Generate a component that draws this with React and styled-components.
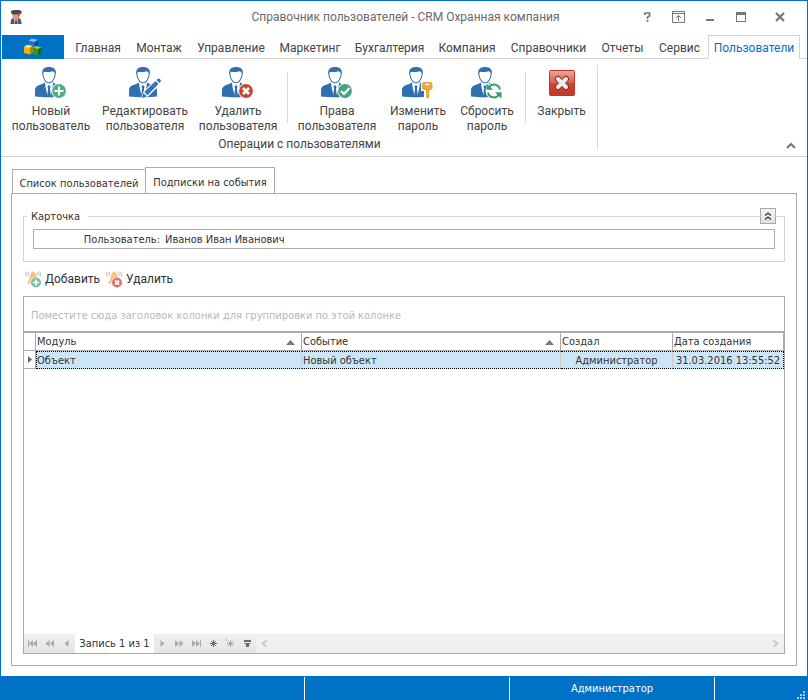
import React from "react";
import styled, { createGlobalStyle } from "styled-components";

const accent = "#0072c6";
const uiFont = 'Roboto, "Open Sans", "Noto Sans", sans-serif';
const formFont = '"DejaVu Sans Condensed", "DejaVu Sans", sans-serif';

const GlobalStyle = createGlobalStyle`
  * {
    box-sizing: border-box;
  }
  body {
    margin: 0;
    background: #fff;
    color: #444;
    font-family: ${uiFont};
    font-size: 12px;
  }
  button, input {
    margin: 0;
    padding: 0;
    border: 0;
    background: none;
    color: inherit;
    font: inherit;
  }
  svg {
    display: block;
    flex: none;
  }
`;

const Window = styled.div`
  display: flex;
  flex-direction: column;
  min-height: 100vh;
  border: 1px solid ${accent};
  border-bottom: 0;
`;

/* title bar */

const TitleBar = styled.header`
  display: grid;
  grid-template-columns: 200px 1fr 200px;
  align-items: center;
  height: 34px;
  padding: 0 4px 2px 7px;
`;

const Title = styled.h1`
  margin: 0;
  font-size: 12px;
  line-height: 20px;
  font-weight: normal;
  text-align: center;
  white-space: nowrap;
  color: #6a6a6a;
`;

const WindowButtons = styled.div`
  display: flex;
  justify-content: flex-end;
`;

const WindowButton = styled.button`
  display: flex;
  align-items: center;
  justify-content: center;
  width: ${(props) => (props.$wide ? "47px" : "31px")};
  height: 20px;
`;

/* ribbon */

const TabRow = styled.nav`
  display: flex;
  align-items: stretch;
  height: 24px;
  padding: 0 6px 0 1px;
  box-shadow: inset 0 -1px #d4d4d4;
`;

const AppButton = styled.button`
  display: flex;
  align-items: center;
  justify-content: center;
  width: 62px;
  margin-right: 4px;
  background: ${accent};
`;

const RibbonTab = styled.button`
  display: flex;
  align-items: center;
  justify-content: center;
  width: ${(props) => props.$width}px;
  padding-top: 1px;
  border: 1px solid transparent;
  border-width: 1px 1px 0;
  white-space: nowrap;
  ${(props) =>
    props.$active &&
    `
    background: #fff;
    border-color: #d4d4d4;
    color: ${accent};
  `}
`;

const Ribbon = styled.section`
  display: flex;
  justify-content: space-between;
  align-items: flex-end;
  padding: 6px 11px 6px 1px;
  border-bottom: 1px solid #d4d4d4;
`;

const RibbonGroup = styled.div`
  display: flex;
  flex-direction: column;
  border-right: 1px solid #d9d9d9;
`;

const RibbonItems = styled.div`
  display: flex;
  height: 74px;
`;

const GroupCaption = styled.div`
  line-height: 11px;
  text-align: center;
`;

const RibbonButton = styled.button`
  display: flex;
  flex-direction: column;
  align-items: center;
  width: ${(props) => props.$width}px;
  padding-top: 2px;
  gap: 5px;
  line-height: 15px;
  text-align: center;
  white-space: pre-line;
`;

const RibbonDivider = styled.div`
  width: 1px;
  height: 51px;
  margin: 7px 0 0 1px;
  background: #d9d9d9;
`;

const CollapseButton = styled.button`
  padding-bottom: 1px;
`;

/* form area */

const Main = styled.main`
  flex: 1;
  display: flex;
  flex-direction: column;
  padding: 10px;
  font-family: ${formFont};
  font-size: 11px;
  color: #333;
`;

const PageTabs = styled.div`
  display: flex;
  align-items: flex-end;
  padding-left: 1px;
`;

const PageTab = styled.button`
  width: ${(props) => props.$width}px;
  height: ${(props) => (props.$active ? 27 : 24)}px;
  margin-bottom: ${(props) => (props.$active ? -1 : 0)}px;
  padding-top: ${(props) => (props.$active ? 2 : 3)}px;
  border: 1px solid #ababab;
  border-bottom: 0;
  border-right-width: ${(props) => (props.$active ? 1 : 0)}px;
  background: #fff;
  white-space: nowrap;
`;

const Page = styled.section`
  flex: 1;
  display: flex;
  flex-direction: column;
  padding: 13px 11px 11px;
  border: 1px solid #ababab;
`;

const CardHeader = styled.div`
  display: flex;
  align-items: center;
  height: 18px;
`;

const CardTitle = styled.h2`
  margin: 0 8px 0 4px;
  font-size: 11px;
  font-weight: normal;
`;

const Rule = styled.span`
  flex: ${(props) => (props.$width ? `none` : 1)};
  width: ${(props) => props.$width || 0}px;
  height: 1px;
  background: #d4d4d4;
`;

const CardToggle = styled.button`
  display: flex;
  align-items: center;
  justify-content: center;
  width: 16px;
  height: 16px;
  border: 1px solid #ababab;
  background: linear-gradient(#f4f4f4, #e2e2e2);
`;

const CardBody = styled.div`
  margin-top: -9px;
  padding: 13px 9px 12px;
  border: 1px solid #d4d4d4;
  border-top: 0;
`;

const Field = styled.div`
  display: flex;
  height: 20px;
  padding-top: 1px;
  border: 1px solid #ababab;
  line-height: 18px;

  label {
    width: 126px;
    text-align: right;
  }

  input {
    flex: 1;
    min-width: 0;
    height: 17px;
    margin-left: 5px;
  }
`;

const Toolbar = styled.div`
  display: flex;
  gap: 6px;
  padding: 8px 2px;
`;

const ToolButton = styled.button`
  display: flex;
  align-items: center;
  gap: 3px;
  height: 18px;
  font-family: ${uiFont};
  font-size: 12px;
  line-height: 18px;
`;

const Grid = styled.div`
  flex: 1;
  display: flex;
  flex-direction: column;
  border: 1px solid #ababab;
`;

const GroupPanel = styled.div`
  height: 36px;
  padding: 0 7px;
  line-height: 37px;
  color: #b8b8b8;
  border-bottom: 2px solid #ababab;
`;

const Table = styled.table`
  width: 100%;
  table-layout: fixed;
  border-collapse: separate;
  border-spacing: 0;
`;

const HeadCell = styled.th`
  height: 18px;
  padding: 1px 1px 0;
  border-right: 1px solid #ababab;
  border-bottom: 1px solid #ababab;
  font-weight: normal;
  line-height: 16px;
  text-align: left;
  white-space: nowrap;

  div {
    display: flex;
    align-items: center;
    justify-content: space-between;
    padding-right: 5px;
  }
`;

const Cell = styled.td`
  height: 18px;
  padding: 1px 1px 0;
  border: 0 solid #cfcbc6;
  border-top: 1px dotted #000;
  border-bottom: 1px dotted #000;
  border-right: 1px solid #cfcbc6;
  background: #cde6f7;
  line-height: 15px;
  white-space: nowrap;
  text-align: ${(props) => props.$align || "left"};

  &:nth-child(2) {
    border-left: 1px dotted #000;
    padding-left: 0;
  }
  &:last-child {
    border-right: 1px dotted #000;
  }
`;

const Indicator = styled.td`
  padding: 0 0 0 4px;
  border-right: 1px solid #ababab;
  border-bottom: 1px solid #ababab;
`;

const GridSpace = styled.div`
  flex: 1;
`;

const Navigator = styled.footer`
  display: flex;
  height: 19px;
  background: #f0f0f0;
`;

const NavGroup = styled.div`
  display: flex;
  background: linear-gradient(#f0f0f0, #e4e4e4);
`;

const NavButton = styled.button`
  display: flex;
  align-items: center;
  justify-content: center;
  width: 17px;
  color: ${(props) => (props.$enabled ? "#6a6a6a" : "#ababab")};
`;

const Position = styled.span`
  width: 79px;
  background: #fff;
  line-height: 20px;
  text-align: center;
  white-space: nowrap;
`;

const ScrollBar = styled.div`
  flex: 1;
  display: flex;
  justify-content: space-between;
`;

/* status bar */

const StatusBar = styled.footer`
  display: grid;
  grid-template-columns: 304fr 205fr 205fr 92fr;
  height: 24px;
  background: ${accent};
  color: #fff;
  font-family: ${formFont};
  font-size: 11px;
`;

const StatusCell = styled.div`
  margin: 1px 0 2px;
  border-right: 1px solid #fff;
  line-height: 23px;
  text-align: center;

  &:last-child {
    display: flex;
    justify-content: flex-end;
    align-items: flex-end;
    margin: 0;
    padding: 0 1px 2px 0;
    border-right: 0;
  }
`;

const badges = {
  add: (
    <g>
      <circle cx="24" cy="24" r="7.8" fill="#fff" />
      <circle cx="24" cy="24" r="6.9" fill="#52ad8a" />
      <path d="M24 19.500v9M19.500 24h9" stroke="#fff" strokeWidth="2" />
    </g>
  ),
  edit: (
    <g>
      <path d="M13 31l2-6L28 12l4 3.500L19 28.500z" fill="#fff" stroke="#fff" strokeWidth="1.500" />
      <path d="M13 31l1.300-5 3.600 3.400z" fill="#3070b0" />
      <path d="M15.300 25L26.500 14l3 3-11 11.300z" fill="#3070b0" />
      <path d="M27.500 13l1.500-1.300c1-.7 3.500 1.500 2.700 2.700L30.400 16z" fill="#3070b0" />
      <path d="M17 26.500l11-11" stroke="#5c90c6" strokeWidth=".6" />
    </g>
  ),
  remove: (
    <g>
      <circle cx="24" cy="24" r="7.8" fill="#fff" />
      <circle cx="24" cy="24" r="6.9" fill="#c9452f" />
      <path d="M21 21l6 6M27 21l-6 6" stroke="#fff" strokeWidth="2.600" />
    </g>
  ),
  check: (
    <g>
      <circle cx="24" cy="24" r="7.8" fill="#fff" />
      <circle cx="24" cy="24" r="6.9" fill="#45a57c" />
      <path d="M20 24l3 3 5.500-6" fill="none" stroke="#fff" strokeWidth="2.200" />
    </g>
  ),
  key: (
    <g>
      <path d="M19 14h12v10h-2v8h-7v-8h-3z" fill="#fff" />
      <path
        d="M21.500 15h7.500l1.500 1.500v5l-1.500 1.500h-1.500v2.500l-1 1 1 1v1.500l-1.500 3-2-2v-7H21.500L20 21.500v-5z"
        fill="#e8a73f"
      />
      <path d="M23.500 17.500h4" stroke="#fff" strokeWidth="1.500" />
    </g>
  ),
  reset: (
    <g>
      <circle cx="23" cy="24" r="8.500" fill="#fff" />
      <g fill="none" stroke="#2f9f70" strokeWidth="2">
        <path d="M18 20.500a6 6 0 0 1 11 2" />
        <path d="M28 27.500a6 6 0 0 1-11-2" />
      </g>
      <path d="M15.500 16.500v6.300h6.500zM30.500 31.500v-6.300h-6.500z" fill="#2f9f70" />
    </g>
  ),
};

const UserIcon = ({ badge }) => (
  <svg width="32" height="32" viewBox="0 0 32 32">
    <path
      d="M0 29.500V24c0-4 1.500-5 5-6.300 2-.8 3.500-1.200 4.500-2.200h9c1 1 2.500 1.400 4.500 2.200 3.500 1.300 5 2.300 5 6.300v5.500c-8 1-20 1-28 0z"
      fill="#3070b0"
    />
    <path d="M10 15h8l-.5 5L15.500 28.500h-3L10.500 20z" fill="#fff" />
    <path d="M13 18.500h2l.5 1.500-.6 1.200 1 8.300h-3.800l1-8.300-.6-1.200z" fill="#3070b0" />
    <path
      d="M6.200 6C6 2 9 0 14 0s8 2 7.800 6c-.2 5-3.300 11.500-7.800 11.500S6.400 11 6.200 6z"
      fill="#fff"
    />
    <path
      d="M7.200 6.500C6.800 2 9.500 0 14 0s7.300 2 6.800 6.500C20.300 11 18 16.300 14 16.300S7.700 11 7.200 6.500z"
      fill="#3070b0"
    />
    <path
      d="M8.300 6.500c.1-.8.3-1.300.7-1.800 3.300.6 6.800.3 9-.4.9.7 1.600 1.200 1.700 2.200C19.400 10.500 17.500 15.200 14 15.200S8.600 10.500 8.300 6.500z"
      fill="#fff"
    />
    {badges[badge]}
  </svg>
);

const CloseIcon = () => (
  <svg width="32" height="32" viewBox="0 0 32 32">
    <defs>
      <linearGradient id="closeFill" x2="0" y2="1">
        <stop offset="0" stopColor="#efa79a" />
        <stop offset=".48" stopColor="#d9604e" />
        <stop offset=".5" stopColor="#cd4636" />
        <stop offset="1" stopColor="#c4372a" />
      </linearGradient>
    </defs>
    <rect x="3.500" y="3.500" width="25" height="25" rx="1" fill="url(#closeFill)" stroke="#b83a2f" />
    <path d="M12 12l8 8M20 12l-8 8" stroke="#8e2b22" strokeWidth="6" strokeLinecap="round" />
    <path d="M12 12l8 8M20 12l-8 8" stroke="#e9edf5" strokeWidth="4" strokeLinecap="round" />
  </svg>
);

const CubesIcon = () => (
  <svg width="18" height="18" viewBox="0 0 18 18">
    <path d="M4.500 2.500L8 .5l6 1.500v6L10 10 4.500 9z" fill="#1d6fe0" />
    <path d="M4.500 2.500L8 .5l6 1.500-3.500 2z" fill="#8cc0ff" />
    <path d="M10.500 4L14 2v6l-3.500 2z" fill="#0b4bb0" />
    <path d="M0 9l3-2 5.500 1v7L6 16.500 0 15z" fill="#f0b400" />
    <path d="M0 9l3-2 5.500 1L6 9.800z" fill="#ffe97a" />
    <path d="M6 9.800L8.500 8v7L6 16.500z" fill="#b87f00" />
    <path d="M9 9.500L12 8l5.500 1.500V15L14 17.500 9 16z" fill="#2f9a1d" />
    <path d="M9 9.500L12 8l5.500 1.500L14 11z" fill="#86d860" />
    <path d="M14 11l3.500-1.500V15L14 17.500z" fill="#186c10" />
  </svg>
);

const OfficerIcon = () => (
  <svg width="16" height="16" viewBox="0 0 16 16">
    <path d="M2.500 15c0-4 1-5.500 3-6h5c2 .5 3 2 3 6z" fill="#55555f" />
    <path d="M6 9.500h4L9.500 15h-3z" fill="#c9ccdb" />
    <path d="M7.600 10h.9l.5 5H7.100z" fill="#34345c" />
    <path d="M4.500 4.500h6.500v3C11 9.500 9.500 10.800 7.800 10.800S4.500 9.500 4.500 7.500z" fill="#e39a78" />
    <path d="M3 2l3-1h5l2.500 1v2.500L11 5.500H4.500L3 4z" fill="#4a4a4a" />
    <path d="M9.500 4H12l-.5 3-1 1.500z" fill="#cf3d22" />
  </svg>
);

const BellIcon = ({ color, remove }) => (
  <svg width="17" height="17" viewBox="0 0 17 17">
    <g fill="none" stroke="#b0b0b0">
      <path d="M2 .5C0 1.500 .5 5 1.500 5.500M4 1C2.500 2 3 4 3.500 4.500M12 1c1 1 1.500 2 1 3.500M14 .5c1.700 1 1.500 3.500 1 5" />
    </g>
    <path d="M8 0l1 1c2.200.7 2.800 3 3.200 7L8 12.500H2c0-1.500 1.700-1.500 2.300-4.500C5 4 5.500 2 7 1z" fill="#f2c48a" />
    <circle cx="11" cy="11.500" r="5.500" fill="#fff" />
    <circle cx="11" cy="11.500" r="5" fill={color} />
    <path
      d={remove ? "M9 9.500l4 4M13 9.500l-4 4" : "M11 8.500v6M8 11.500h6"}
      stroke="#fff"
      strokeWidth={remove ? 2 : 1.5}
    />
  </svg>
);

const SortArrow = () => (
  <svg width="9" height="5" viewBox="0 0 9 5">
    <path d="M0 5l4.500-5L9 5z" fill="#777" />
  </svg>
);

const navShapes = {
  first: "M0 1h1v7H0zM5 1v7L1 4.500zM9 1v7L5 4.500z",
  prevPage: "M4.500 1v7L.5 4.500zM9 1v7L5 4.500z",
  prev: "M6.500 1v7l-4-3.500z",
  next: "M2.500 1v7l4-3.500z",
  nextPage: "M0 1v7l4-3.500zM4.500 1v7l4-3.500z",
  last: "M0 1v7l4-3.500zM4 1v7l4-3.500zM8 1h1v7H8z",
  filter: "M1 1h7v2H1zM1 4h7L6 5.500V8H3V5.500z",
};

const NavIcon = ({ name }) => (
  <svg width="9" height="9" viewBox="0 0 9 9" fill="currentColor">
    {navShapes[name] ? (
      <path d={navShapes[name]} />
    ) : (
      <g fill="none" stroke="currentColor">
        <path d="M4.500 1v7M1 4.500h7M2 2l5 5M7 2L2 7" />
        {name === "appendCopy" && <path d="M.5 0v2" />}
      </g>
    )}
  </svg>
);

const ScrollArrow = ({ right }) => (
  <svg width="7" height="7" viewBox="0 0 7 7">
    <path
      d={right ? "M1.500 .5l4 3-4 3" : "M5.500 .5l-4 3 4 3"}
      fill="none"
      stroke="#c6c6c6"
      strokeWidth="1.600"
    />
  </svg>
);

const ribbonTabs = [
  ["Главная", 60],
  ["Монтаж", 62],
  ["Управление", 82],
  ["Маркетинг", 76],
  ["Бухгалтерия", 83],
  ["Компания", 72],
  ["Справочники", 91],
  ["Отчеты", 57],
  ["Сервис", 57],
  ["Пользователи", 92],
];

const userActions = [
  ["Новый\nпользователь", 98, "add"],
  ["Редактировать\nпользователя", 90, "edit"],
  ["Удалить\nпользователя", 96, "remove"],
];

const rightsActions = [
  ["Права\nпользователя", 98, "check"],
  ["Изменить\nпароль", 64, "key"],
  ["Сбросить\nпароль", 74, "reset"],
];

const rows = [
  {
    module: "Объект",
    event: "Новый объект",
    author: "Администратор",
    created: "31.03.2016 13:55:52",
  },
];

const renderActions = (actions) =>
  actions.map(([label, width, badge]) => (
    <RibbonButton key={label} $width={width}>
      <UserIcon badge={badge} />
      {label}
    </RibbonButton>
  ));

const WindowHeader = () => (
  <TitleBar>
    <OfficerIcon />
    <Title>Справочник пользователей - CRM Охранная компания</Title>
    <WindowButtons>
      <WindowButton aria-label="Справка">
        <svg width="7" height="10" viewBox="0 0 7 10" fill="none" stroke="#777" strokeWidth="1.700">
          <path d="M1 3V1h4.500v3L3.500 5v2M3.500 8v2" />
        </svg>
      </WindowButton>
      <WindowButton aria-label="Параметры ленты">
        <svg width="13" height="12" viewBox="0 0 13 12" fill="none" stroke="#777">
          <path d="M.5.5h12v11H.5zM0 2.500h13M6.500 10V4.500M4 7l2.500-2.500L9 7" />
        </svg>
      </WindowButton>
      <WindowButton aria-label="Свернуть">
        <svg width="8" height="10" viewBox="0 0 8 10">
          <path d="M0 7h8v2H0z" fill="#777" />
        </svg>
      </WindowButton>
      <WindowButton aria-label="Развернуть">
        <svg width="10" height="10" viewBox="0 0 10 10">
          <path d="M0 0h10v10H0zM1 3v6h8V3z" fill="#777" fillRule="evenodd" />
        </svg>
      </WindowButton>
      <WindowButton $wide aria-label="Закрыть окно">
        <svg width="10" height="10" viewBox="0 0 10 10">
          <path d="M1 1l8 8M9 1L1 9" stroke="#777" strokeWidth="2.200" />
        </svg>
      </WindowButton>
    </WindowButtons>
  </TitleBar>
);

const RibbonPanel = () => (
  <>
    <TabRow>
      <AppButton aria-label="Меню приложения">
        <CubesIcon />
      </AppButton>
      {ribbonTabs.map(([label, width]) => (
        <RibbonTab key={label} $width={width} $active={label === "Пользователи"}>
          {label}
        </RibbonTab>
      ))}
    </TabRow>
    <Ribbon>
      <RibbonGroup>
        <RibbonItems>
          {renderActions(userActions)}
          <RibbonDivider />
          {renderActions(rightsActions)}
          <RibbonDivider />
          <RibbonButton $width={71}>
            <CloseIcon />
            Закрыть
          </RibbonButton>
        </RibbonItems>
        <GroupCaption>Операции с пользователями</GroupCaption>
      </RibbonGroup>
      <CollapseButton aria-label="Свернуть ленту">
        <svg width="10" height="7" viewBox="0 0 10 7">
          <path d="M1 6l4-4 4 4" fill="none" stroke="#777" strokeWidth="2" />
        </svg>
      </CollapseButton>
    </Ribbon>
  </>
);

const UserCard = () => (
  <section>
    <CardHeader>
      <Rule $width={4} />
      <CardTitle>Карточка</CardTitle>
      <Rule />
      <CardToggle aria-label="Свернуть карточку">
        <svg width="8" height="8" viewBox="0 0 8 8">
          <path d="M1 3.500l3-2.500 3 2.500M1 7.500L4 5l3 2.500" fill="none" stroke="#333" strokeWidth="1.300" />
        </svg>
      </CardToggle>
      <Rule $width={9} />
    </CardHeader>
    <CardBody>
      <Field>
        <label htmlFor="user">Пользователь:</label>
        <input id="user" defaultValue="Иванов Иван Иванович" />
      </Field>
    </CardBody>
  </section>
);

const SubscriptionGrid = () => (
  <Grid>
    <GroupPanel>Поместите сюда заголовок колонки для группировки по этой колонке</GroupPanel>
    <Table>
      <colgroup>
        <col width="12" />
        <col width="35%" />
        <col />
        <col width="112" />
        <col width="111" />
      </colgroup>
      <thead>
        <tr>
          <HeadCell />
          <HeadCell>
            <div>
              Модуль
              <SortArrow />
            </div>
          </HeadCell>
          <HeadCell>
            <div>
              Событие
              <SortArrow />
            </div>
          </HeadCell>
          <HeadCell>Создал</HeadCell>
          <HeadCell>Дата создания</HeadCell>
        </tr>
      </thead>
      <tbody>
        {rows.map((row) => (
          <tr key={row.created}>
            <Indicator>
              <svg width="5" height="7" viewBox="0 0 5 7">
                <path d="M0 0v7l4-3.500z" fill="#666" />
              </svg>
            </Indicator>
            <Cell>{row.module}</Cell>
            <Cell>{row.event}</Cell>
            <Cell $align="center">{row.author}</Cell>
            <Cell $align="center">{row.created}</Cell>
          </tr>
        ))}
      </tbody>
    </Table>
    <GridSpace />
    <Navigator>
      <NavGroup>
        {["first", "prevPage", "prev"].map((name) => (
          <NavButton key={name} aria-label={name}>
            <NavIcon name={name} />
          </NavButton>
        ))}
      </NavGroup>
      <Position>Запись 1 из 1</Position>
      <NavGroup>
        {["next", "nextPage", "last", "append", "appendCopy", "filter"].map((name) => (
          <NavButton key={name} aria-label={name} $enabled={name === "append" || name === "filter"}>
            <NavIcon name={name} />
          </NavButton>
        ))}
      </NavGroup>
      <ScrollBar>
        <NavButton aria-label="scroll left">
          <ScrollArrow />
        </NavButton>
        <NavButton aria-label="scroll right">
          <ScrollArrow right />
        </NavButton>
      </ScrollBar>
    </Navigator>
  </Grid>
);

const App = () => {
  return (
    <Window>
      <GlobalStyle />
      <WindowHeader />
      <RibbonPanel />
      <Main>
        <PageTabs>
          <PageTab $width={133}>Список пользователей</PageTab>
          <PageTab $width={130} $active>
            Подписки на события
          </PageTab>
        </PageTabs>
        <Page>
          <UserCard />
          <Toolbar>
            <ToolButton>
              <BellIcon color="#7cc0a6" />
              Добавить
            </ToolButton>
            <ToolButton>
              <BellIcon color="#da7466" remove />
              Удалить
            </ToolButton>
          </Toolbar>
          <SubscriptionGrid />
        </Page>
      </Main>
      <StatusBar>
        <StatusCell />
        <StatusCell />
        <StatusCell>Администратор</StatusCell>
        <StatusCell>
          <svg width="9" height="9" viewBox="0 0 9 9" fill="#b9c7d6">
            <path d="M6 0h2v2H6zM3 3h2v2H3zM6 3h2v2H6zM0 6h2v2H0zM3 6h2v2H3zM6 6h2v2H6z" />
          </svg>
        </StatusCell>
      </StatusBar>
    </Window>
  );
};

export default App;
